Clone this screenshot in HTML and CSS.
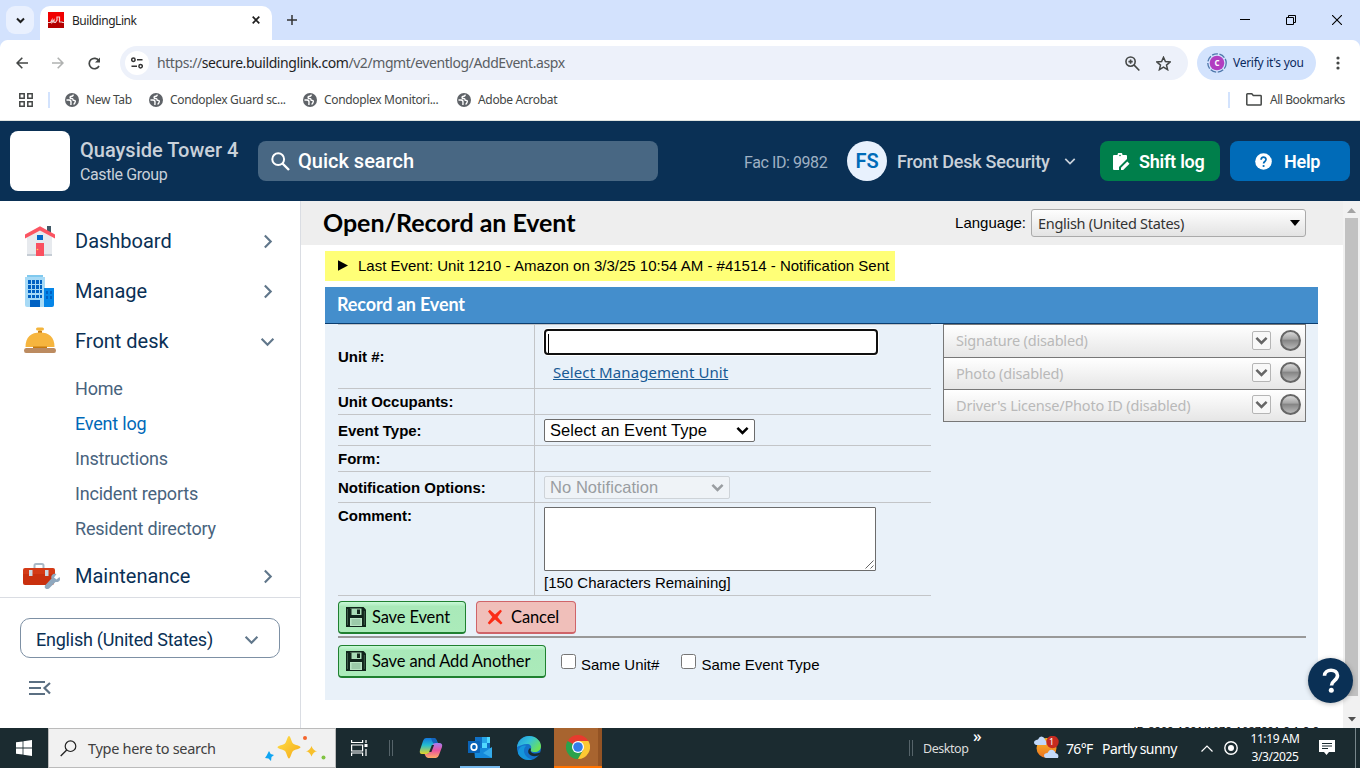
FILE: index.html
```html
<!DOCTYPE html>
<html lang="en">
<head>
<meta charset="utf-8">
<title>BuildingLink</title>
<link rel="stylesheet" href="styles.css">
</head>
<body>
<svg width="0" height="0" class="defs" aria-hidden="true">
  <defs>
    <symbol id="globe" viewBox="0 0 14 14"><circle cx="7" cy="7" r="7" fill="#5f6368"/><path d="M8.300 1.600 8 2.600q-.3.800-1.500.700Q5 3.300 5.100 4.600q.1.900 1.200.9 1.800-.1 1.700 1.300.1.700 1.200.6 1.300 0 1.100 1.300-.3 1.800-1.700 2.800M1.500 7h2.600q2 .2 1.900 2l-.1 3" fill="none" stroke="#fff" stroke-width="1.400"/></symbol>
    <symbol id="chev" viewBox="0 0 14 14"><path d="M1.500 4.500 7 10l5.500-5.500" fill="none" stroke="currentColor" stroke-width="2"/></symbol>
    <symbol id="chevbold" viewBox="0 0 14 14"><path d="M1.500 4.200 7 9.700l5.500-5.500" fill="none" stroke="currentColor" stroke-width="2.700"/></symbol>
    <symbol id="floppy" viewBox="0 0 20 20"><path d="M0 0h17.500l2.500 2.500V20H0z" fill="#10241b"/><path d="M4 1.500h11.500V8H4z" fill="#a9dcb7"/><path d="M11 2.500h3V7h-3zM4 1.500h1.500V8H4z" fill="#14271d"/><path d="M4 11h12v8H4z" fill="#b9e4c4"/><path d="M5.500 13h9M5.500 15h9M5.500 17h9" stroke="#7fb08e"/><path d="M1.500 2v16M18.300 4v14" stroke="#3c5c48"/></symbol>
  </defs>
</svg>

<div class="tabstrip">
  <div class="tabsearch"><svg width="9" height="7" viewBox="0 0 9 7"><path d="M1 1.500 4.500 5 8 1.500" fill="none" stroke="#1f1f1f" stroke-width="2"/></svg></div>
  <div class="tab">
    <svg class="favicon" width="16" height="16" viewBox="0 0 16 16"><path fill="#f00000" d="M0 0h16v9H0z"/><path fill="#b30000" d="M0 9h16v7H0z"/><path d="M0 10.500h2.500L4 8v2.500L6 8v2.500h1.500L9 8V5h2.500v5H14l.5.500H16" fill="none" stroke="#f3c9c9" stroke-width="1.200"/></svg>
    <span class="tab-title">BuildingLink</span>
    <svg width="8" height="8" viewBox="0 0 8 8"><path d="m.7.7 6.600 6.600M7.300.7.700 7.300" stroke="#1f1f1f" stroke-width="1.700"/></svg>
  </div>
  <svg class="newtab" width="10" height="10" viewBox="0 0 10 10"><path d="M5 0v10M0 5h10" stroke="#333" stroke-width="1.500"/></svg>
  <div class="winbtns">
    <svg width="10" height="10" viewBox="0 0 10 10"><path d="M0 4.500h10" stroke="#000"/></svg>
    <svg width="10" height="10" viewBox="0 0 10 10"><path d="M.5 2.500h7v7h-7zM2.500 2.500v-2h7v7h-2" fill="none" stroke="#000"/></svg>
    <svg width="10" height="10" viewBox="0 0 10 10"><path d="m0 0 10 10M10 0 0 10" stroke="#000" stroke-width="1.100"/></svg>
  </div>
</div>

<div class="toolbar">
  <svg class="nav-back" width="12" height="12" viewBox="0 0 12 12"><path d="M12 6H1.300M6.300.8 1.100 6l5.200 5.200" fill="none" stroke="#444746" stroke-width="1.600"/></svg>
  <svg class="nav-fwd" width="12" height="12" viewBox="0 0 12 12"><path d="M0 6h10.700M5.700.8 10.900 6l-5.200 5.200" fill="none" stroke="#b0b2b1" stroke-width="1.600"/></svg>
  <svg class="nav-reload" width="13" height="13" viewBox="0 0 13 13"><path d="M11 9a5.200 5.200 0 1 1-.2-5.300" fill="none" stroke="#444746" stroke-width="1.700"/><path d="M12 .5v5H7z" fill="#444746"/></svg>
  <div class="omnibox">
    <div class="siteinfo"><svg width="12" height="12" viewBox="0 0 12 12"><g fill="none" stroke="#333" stroke-width="1.500"><circle cx="2.400" cy="2.700" r="1.700"/><path d="M6 2.700h5.500M.5 9.200H6"/><circle cx="9.600" cy="9.200" r="1.700"/></g></svg></div>
    <div class="url"><span class="scheme">https://</span>secure.buildinglink.com<span class="path">/v2/mgmt/eventlog/AddEvent.aspx</span></div>
    <svg class="zoomico" width="15" height="15" viewBox="0 0 14 14"><g fill="none" stroke="#444746" stroke-width="1.500"><circle cx="5.200" cy="5.200" r="4.300"/><path d="m8.300 8.300 5.100 5.200M5.200 3.200v4M3.200 5.200h4"/></g></svg>
    <svg class="starico" width="15" height="15" viewBox="0 0 15 15"><path d="m7.500 1.300 1.900 4.300 4.700.4-3.600 3.100 1.100 4.600-4.100-2.500-4.100 2.500 1.100-4.600L.9 6l4.700-.4z" fill="none" stroke="#444746" stroke-width="1.500"/></svg>
  </div>
  <div class="profile"><svg class="avatar-ring" width="20" height="20" viewBox="0 0 20 20"><circle cx="10" cy="10" r="9.200" fill="none" stroke="#4e77ab" stroke-width="1.300" stroke-dasharray="6 1.600" /><circle cx="10" cy="10" r="7.300" fill="#b23ec0"/><text x="10" y="13.300" text-anchor="middle" class="ring-letter">c</text></svg><span class="verify">Verify it's you</span></div>
  <svg class="dots" width="4" height="16" viewBox="0 0 4 16"><g fill="#444746"><circle cx="2" cy="3" r="1.600"/><circle cx="2" cy="8" r="1.600"/><circle cx="2" cy="13" r="1.600"/></g></svg>
</div>

<div class="bookmarks">
  <svg class="apps" width="14" height="14" viewBox="0 0 14 14"><path d="M.8.8h4.400v4.400H.8zM8.800.8h4.400v4.400H8.800zM.8 8.800h4.400v4.400H.8zM8.800 8.800h4.400v4.400H8.800z" fill="none" stroke="#444746" stroke-width="1.500"/></svg>
  <i class="bm-sep"></i>
  <div class="bm bm-a"><svg width="14" height="14"><use href="#globe"/></svg><span>New Tab</span></div>
  <div class="bm bm-b"><svg width="14" height="14"><use href="#globe"/></svg><span>Condoplex Guard sc...</span></div>
  <div class="bm bm-b"><svg width="14" height="14"><use href="#globe"/></svg><span>Condoplex Monitori...</span></div>
  <div class="bm"><svg width="14" height="14"><use href="#globe"/></svg><span>Adobe Acrobat</span></div>
  <i class="bm-sep bm-right"></i>
  <div class="bm bm-all"><svg width="16" height="13" viewBox="0 0 16 13"><path d="M.8 1.500q0-.7.700-.7h4.300L7.300 2.500h7.200q.7 0 .7.700v8q0 .8-.7.800h-13q-.7 0-.7-.8z" fill="none" stroke="#444746" stroke-width="1.500"/></svg><span>All Bookmarks</span></div>
</div>

<header class="appbar">
  <div class="logo"></div>
  <div class="property"><div class="pname">Quayside Tower 4</div><div class="pgroup">Castle Group</div></div>
  <div class="search"><svg width="19" height="19" viewBox="0 0 19 19"><circle cx="7.200" cy="7.200" r="5.900" fill="none" stroke="#fff" stroke-width="2"/><path d="m11.500 11.500 6.500 6.500" stroke="#fff" stroke-width="2.400"/></svg><span>Quick search</span></div>
  <div class="fac">Fac ID: 9982</div>
  <div class="initials">FS</div>
  <div class="user">Front Desk Security</div>
  <svg class="userchev" width="12" height="12"><use href="#chev"/></svg>
  <div class="hbtn green"><svg width="18" height="18" viewBox="0 0 18 18"><path d="M2 2h3.500a2.500 2.500 0 0 1 5 0H14q1 0 1 1v3L7 14v3H2q-1 0-1-1V3q0-1 1-1z" fill="#fff"/><path d="m9 14.800 6.300-6.300 2.200 2.200-6.300 6.300H9z" fill="#fff"/><circle cx="8" cy="2.500" r=".8" fill="#007f4b"/></svg><span>Shift log</span></div>
  <div class="hbtn blue"><svg width="17" height="17" viewBox="0 0 17 17"><circle cx="8.500" cy="8.500" r="8.300" fill="#fff"/><path d="M6.100 6.800C6.100 3.300 11 3.400 11 6.500c0 2-2.400 2-2.400 4" fill="none" stroke="#006bb8" stroke-width="1.700"/><circle cx="8.600" cy="13" r="1.100" fill="#006bb8"/></svg><span>Help</span></div>
</header>

<div class="main">
  <nav class="sidebar">
    <div class="menu">
      <div class="item"><svg class="mi" width="32" height="32" viewBox="0 0 32 32"><path d="M23 1h4v8h-4z" fill="#435967"/><path d="M3 12 16 3l12 9v18q0 1-1 1H4q-1 0-1-1z" fill="#e7eaee"/><path d="M3 29h25v2H3z" fill="#c5ccd4"/><path d="m1 9.500 15-8.300 15 8.300v4L16 5.500 1 13.500z" fill="#fb5462"/><path d="M13 10h6v5h-6z" fill="#0067c8"/><path d="M12 18h8v13h-8z" fill="#fa5060"/><circle cx="13.500" cy="24.500" r=".8" fill="#ffd15c"/></svg><span>Dashboard</span><svg class="mc right" width="15" height="15"><use href="#chev"/></svg></div>
      <div class="item"><svg class="mi" width="32" height="32" viewBox="0 0 32 32"><path d="M3 0h16v3H3z" fill="#80c9ee"/><path d="M1 2h20v28q0 2-2 2H3q-2 0-2-2z" fill="#a7daf6"/><path d="M20 13h10v17q0 2-2 2h-8z" fill="#0586e8"/><path d="M4 5h3v4H4zm4 0h3v4H8zm4 0h3v4h-3zm4 0h2v4h-2zM4 10h3v4H4zm4 0h3v4H8zm4 0h3v4h-3zm4 0h2v4h-2zM4 15h3v3H4zm4 0h3v3H8zm4 0h3v3h-3zm4 0h2v3h-2zM4 20h3v3H4zm4 0h3v3H8zm4 0h3v3h-3zm4 0h2v3h-2zM6 25h10v7H6zM22 16h2v3h-2zm4 0h2v3h-2zm-4 5h2v3h-2zm4 0h2v3h-2z" fill="#0061c3"/></svg><span>Manage</span><svg class="mc right" width="15" height="15"><use href="#chev"/></svg></div>
      <div class="item"><svg class="mi" width="32" height="32" viewBox="0 0 32 32"><path d="M12 4q0-1.500 1.500-1.500h5Q20 2.500 20 4t-2 1.500h-4Q12 5.500 12 4zM14.500 5h3v3h-3z" fill="#f3b43b"/><path d="M14 6h4v2h-4z" fill="#c87d18"/><path d="M1.500 22C1.500 12 7 7.500 16 7.500S30.500 12 30.500 22z" fill="#f6b53e"/><path d="M9 20h14v3H9z" fill="#c67a10"/><path d="M2 18h28v3.500H2z" fill="#f6b53e"/><path d="M2 23h28q2 0 2 2.500T30 28H2q-2 0-2-2.500T2 23z" fill="#bc8b60"/></svg><span>Front desk</span><svg class="mc" width="15" height="15"><use href="#chev"/></svg></div>
      <div class="sub">
        <a>Home</a><a class="active">Event log</a><a>Instructions</a><a>Incident reports</a><a>Resident directory</a>
      </div>
      <div class="item item-last"><svg class="mi wide" width="38" height="28" viewBox="0 0 38 28"><path d="M11.500 7V3.500Q11.500 2 13 2h6q1.500 0 1.500 1.500V7" fill="none" stroke="#a9b9c7" stroke-width="2"/><path d="M2 6h28q2 0 2 2v6H0V8q0-2 2-2z" fill="#d43a16"/><path d="M0 12h31v9q0 2-2 2H2q-2 0-2-2z" fill="#c9300e"/><path d="M6 8h3.500v6H6zM22 8h3.500v6H22z" fill="#cbd8e3"/><path d="m26 26.500 6.500-6.500c5 .5 5-3 4-5l-3 2.500-2.500-2 2.500-3.500c-3-.8-6 1-5 4.500L22 23.500q-1 2 .5 3t3.500 0z" fill="#8fa8be"/></svg><span>Maintenance</span><svg class="mc right" width="15" height="15"><use href="#chev"/></svg></div>
    </div>
    <div class="sidefoot">
      <div class="langbox"><span>English (United States)</span><svg width="15" height="15"><use href="#chev"/></svg></div>
      <svg class="collapse" width="24" height="16" viewBox="0 0 24 16"><path d="M1 2h16M1 8h12M1 14h16M22 3l-5.500 5 5.500 5.500" fill="none" stroke="#5b6f82" stroke-width="2.200"/></svg>
    </div>
  </nav>

  <div class="content">
    <div class="titlebar"><h1>Open/Record an Event</h1><label>Language:</label><div class="langsel"><span>English (United States)</span><svg width="10" height="6" viewBox="0 0 10 6"><path d="M0 0h10L5 6z"/></svg></div></div>
    <div class="lastevent"><svg width="10" height="11" viewBox="0 0 10 11"><path d="M0 .3 10 5.500 0 10.700z"/></svg><span>Last Event: Unit 1210 - Amazon on 3/3/25 10:54 AM - #41514 - Notification Sent</span></div>
    <section class="panel">
      <h2>Record an Event</h2>
      <div class="cols">
        <div class="form">
          <div class="row r-unit"><div class="lab"><span>Unit #:</span></div><div class="val"><div class="unitinput"><i></i></div><a class="mgmt">Select Management Unit</a></div></div>
          <div class="row r-occ"><div class="lab"><span>Unit Occupants:</span></div><div class="val"></div></div>
          <div class="row r-type"><div class="lab"><span>Event Type:</span></div><div class="val"><div class="sel sel-type"><span>Select an Event Type</span><svg width="13" height="13"><use href="#chevbold"/></svg></div></div></div>
          <div class="row r-form"><div class="lab"><span>Form:</span></div><div class="val"></div></div>
          <div class="row r-notif"><div class="lab"><span>Notification Options:</span></div><div class="val"><div class="sel sel-notif"><span>No Notification</span><svg width="13" height="13"><use href="#chevbold"/></svg></div></div></div>
          <div class="row r-comment"><div class="lab"><span>Comment:</span></div><div class="val"><div class="area"><svg width="9" height="9" viewBox="0 0 9 9"><path d="M.5 8.500l8-8M5.500 8.500l3-3" stroke="#555" stroke-width=".9"/></svg></div><div class="remain">[150 Characters Remaining]</div></div></div>
        </div>
        <div class="acc">
          <div class="arow"><span>Signature (disabled)</span><b><svg width="13" height="13"><use href="#chevbold"/></svg></b><i></i></div>
          <div class="arow"><span>Photo (disabled)</span><b><svg width="13" height="13"><use href="#chevbold"/></svg></b><i></i></div>
          <div class="arow"><span>Driver's License/Photo ID (disabled)</span><b><svg width="13" height="13"><use href="#chevbold"/></svg></b><i></i></div>
        </div>
      </div>
      <div class="actions">
        <div class="btn save"><svg width="20" height="20"><use href="#floppy"/></svg><span>Save Event</span></div>
        <div class="btn cancel"><svg width="16" height="16" viewBox="0 0 16 16"><path d="M1 2.500 2.800.7 8 5.500 13.300.7 15 2l-4.500 6L15.500 14l-1.700 1.600L8 10.500 2.500 15.500.7 14l4.600-6z" fill="#fb2c16"/></svg><span>Cancel</span></div>
      </div>
      <div class="actions second">
        <div class="btn save another"><svg width="20" height="20"><use href="#floppy"/></svg><span>Save and Add Another</span></div>
        <div class="chk chk-a"><i></i><span>Same Unit#</span></div>
        <div class="chk"><i></i><span>Same Event Type</span></div>
      </div>
    </section>
    <div class="foot"><span>ID 8202-1221/1672-1637201 2 1 2 2</span></div>
  </div>
  <div class="scroll"><svg width="9" height="5" viewBox="0 0 9 5"><path d="M0 5 4.500 0 9 5z" fill="#a3a3a3"/></svg><div class="thumb"></div><svg class="dn" width="8" height="5" viewBox="0 0 8 5"><path d="M0 0h8L4 4.500z" fill="#505050"/></svg></div>
  <div class="fab"><svg width="18" height="25" viewBox="0 0 18 25"><path d="M2.500 7.800C2.500.2 15.500.5 15.500 7.500c0 5-6 5.300-6 10" fill="none" stroke="#fff" stroke-width="3.600"/><circle cx="9.300" cy="22.300" r="2.500" fill="#fff"/></svg></div>
</div>

<footer class="taskbar">
  <div class="start"><svg width="16" height="16" viewBox="0 0 16 16"><path d="m0 2.300 6.600-.9v6.200H0zM7.400 1.300 16 0v7.600H7.400zM0 8.400h6.600v6.200L0 13.700zM7.400 8.400H16V16l-8.600-1.200z" fill="#fff"/></svg></div>
  <div class="tsearch">
    <svg width="17" height="17" viewBox="0 0 17 17"><circle cx="10.500" cy="6.200" r="5.300" fill="none" stroke="#222" stroke-width="1.200"/><path d="M6.700 10 .7 16" stroke="#222" stroke-width="1.300"/></svg>
    <span>Type here to search</span>
    <svg class="sparkles" width="62" height="26" viewBox="0 0 62 26"><defs><linearGradient id="gold" x2="1" y2="1"><stop stop-color="#ffe04a"/><stop offset="1" stop-color="#f5aa18"/></linearGradient></defs><path d="M24 1c1.500 0 2.500 6 4 7.500s7.500 2.200 7.500 3.700-6 2.300-7.500 3.800-2.500 7.500-4 7.500-2.500-6-4-7.500-7.500-2.300-7.500-3.800S18.500 10 20 8.500 22.500 1 24 1z" fill="url(#gold)"/><path d="M46.500 11q1.500 4.500 5.500 5.300-4 .7-5.500 5.200-1.500-4.500-5.500-5.200 4-.8 5.500-5.300z" fill="#f8c02c"/><path d="m4 16 1.700 3 3.300 1-2.500 2-.5 4-2.500-2.500L0 23l1.700-2.500z" fill="#10a5f2"/><circle cx="40" cy="3" r="2" fill="#f4652c"/><circle cx="58.500" cy="22.500" r="2" fill="#80c342"/></svg>
  </div>
  <svg class="tv" width="17" height="16" viewBox="0 0 17 16"><path d="M.6 0v2.500h11V0M.6 16v-3h11v3M.6 5h11v6H.6zM15 0v3M15 9v7" fill="none" stroke="#fff" stroke-width="1.200"/><path d="M13.500 4h3v3h-3z" fill="#fff"/></svg>
  <i class="grip"></i>
  <svg class="copilot" width="24" height="22" viewBox="0 0 24 22"><defs><linearGradient id="cp1" x2="0" y2="1"><stop stop-color="#1477dd"/><stop offset=".45" stop-color="#24bdd0"/><stop offset="1" stop-color="#e8d326"/></linearGradient><linearGradient id="cp2" x2="0" y2="1"><stop stop-color="#a67cf2"/><stop offset=".5" stop-color="#e9559d"/><stop offset="1" stop-color="#ffac64"/></linearGradient></defs><path d="M7 1h8q2 0 3 3l1 3h-3q-2 0-3 3l-2 5q-1 2-3 2H3Q0 17 1 13l3-9q1-3 3-3z" fill="url(#cp1)"/><path d="M12 1h3q2 0 3 3l1 3h-3q-2 0-3-3z" fill="#1464bd"/><path d="M17 21H9q-2 0-3-3l-.4-1H8q2 0 3-3l2-5q1-3 4-3h3q4 0 3 4l-3 8q-1 3-3 3z" fill="url(#cp2)"/><path d="m10.200 15 2.700-7h2.200l-2.700 7z" fill="#1b2b30"/></svg>
  <div class="tb outlook"><svg width="24" height="22" viewBox="0 0 24 22"><path d="M7 1h15v13H7z" fill="#1070c5"/><path d="M14 1h5v6h-5z" fill="#28a7e8"/><path d="M19 1h3v6h-3zM14 7h5v6h-5z" fill="#50d9ff"/><path d="M6 12h18v9q0 1-1 1H7z" fill="#1489da"/><path d="m6 12 18 10V11l-9 6z" fill="#35abe9"/><path d="M0 5h11q1 0 1 1v10q0 1-1 1H0z" fill="#0a63b7"/><ellipse cx="6" cy="11" rx="2.800" ry="3.200" fill="none" stroke="#fff" stroke-width="1.700"/></svg></div>
  <div class="tb edge"><svg width="24" height="24" viewBox="0 0 24 24"><defs><linearGradient id="ed" x2="1" y2=".6"><stop stop-color="#2196dd"/><stop offset=".5" stop-color="#34c1da"/><stop offset="1" stop-color="#6be257"/></linearGradient></defs><circle cx="12" cy="12" r="12" fill="#1472ca"/><path d="M0 11C1 4 6 0 12 0c7 0 12 5 12 10 0 4-3 6-6 6-4 0-5-1.500-4-3 1-3-1-5-4-5-4 0-8 2-10 3z" fill="url(#ed)"/><path d="M9 10c-5 5 0 13 7 13.500-5 1.500-12 0-15-6 0-6 5-9 8-7.500z" fill="#1595db"/><path d="M14 13c-2 4 4 6 9 3.500q1 .2.500 1c-3 3.500-7 3-9.500 2-3-1.500-4-5-1-7.500z" fill="#1a2b30"/></svg></div>
  <div class="tb chrome"><svg width="24" height="24" viewBox="0 0 24 24"><path d="M12 12 1.600 6A12 12 0 0 1 22.400 6z" fill="#e83b2e"/><path d="M12 12 1.600 6A12 12 0 0 0 12 24l5.200-9z" fill="#2ba24c"/><path d="M12 6h10.400A12 12 0 0 1 12 24l5.200-9z" fill="#fcc934"/><circle cx="12" cy="12" r="6" fill="#fff"/><circle cx="12" cy="12" r="4.800" fill="#347de8"/></svg></div>
  <i class="grip grip2"></i>
  <span class="desk">Desktop</span><span class="more">»</span>
  <svg class="weather" width="26" height="24" viewBox="0 0 26 24"><defs><linearGradient id="sun" x2="0" y2="1"><stop stop-color="#f8bd2a"/><stop offset="1" stop-color="#ed701e"/></linearGradient></defs><circle cx="12.500" cy="12" r="10" fill="url(#sun)"/><path d="M2 9q-3-1-1.500-4Q2 3.500 4 3.500 6-1 9 1q2 1 2 3 3 2 1 5z" fill="#c2d8f8"/><path d="M12 22q-3-1-1.500-4Q12 17 13.500 17q2-4.500 5.500-3 2 1 2.500 3 4 1 2.500 5z" fill="#c5daf9"/><circle cx="18.500" cy="6" r="6.200" fill="#c62a20"/></svg>
  <span class="wbadge">1</span>
  <span class="temp">76°F</span><span class="sunny">Partly sunny</span>
  <svg class="up" width="12" height="7" viewBox="0 0 12 7"><path d="M.5 6.500 6 1l5.500 5.500" fill="none" stroke="#fff" stroke-width="1.200"/></svg>
  <svg class="rec" width="14" height="14" viewBox="0 0 14 14"><circle cx="7" cy="7" r="6.200" fill="none" stroke="#fff" stroke-width="1.400"/><circle cx="7" cy="7" r="3" fill="#fff"/></svg>
  <div class="clock"><div class="t1">11:19 AM</div><div class="t2">3/3/2025</div></div>
  <svg class="note" width="16" height="16" viewBox="0 0 16 16"><path d="M0 0h16v12h-6l-2.500 3L5 12H0z" fill="#fff"/><path d="M3 3.500h10M3 6h10M3 8.500h6" stroke="#1b2b30" stroke-width="1.100"/></svg>
  <i class="showdesk"></i>
</footer>
</body>
</html>
```
FILE: styles.css
```css
*{box-sizing:border-box}
body{margin:0;width:1360px;height:768px;overflow:hidden;display:flex;flex-direction:column;background:#fff;font-family:"Liberation Sans",Arial,sans-serif;color:#000}
svg{display:block;flex:none}
.defs{position:absolute}
span,div{white-space:nowrap}

.tabstrip{height:40px;flex:none;background:#d3e2fd;display:flex;align-items:center;font-family:"Noto Sans","Open Sans",sans-serif}
.tabsearch{width:28px;height:28px;margin-left:6px;border-radius:9px;background:#e9f0fe;display:flex;align-items:center;justify-content:center}
.tab{width:232px;height:34px;margin:6px 0 0 6px;background:#fff;border-radius:10px 10px 0 0;display:flex;align-items:center;padding:0 12px 6px 8px}
.tab-title{margin-left:8px;flex:1;font-size:12px;letter-spacing:-.45px;color:#1f1f1f}
.newtab{margin-left:15px}
.winbtns{margin-left:auto;display:flex;gap:36px;padding-right:18px}

.toolbar{height:46px;flex:none;display:flex;align-items:center;background:linear-gradient(#d3e2fd,#d3e2fd) top/100% 10px no-repeat;font-family:"Noto Sans","Open Sans",sans-serif}
.toolbar{background:radial-gradient(circle at 8px 8px,#fff 7.500px,#d3e2fd 8.500px) 0 0/8px 8px no-repeat,radial-gradient(circle at 0 8px,#fff 7.500px,#d3e2fd 8.500px) 100% 0/8px 8px no-repeat,#fff}
.nav-back{margin-left:16px}.nav-fwd{margin-left:24px}.nav-reload{margin-left:24px}
.omnibox{width:1068px;height:34px;margin-left:19px;border-radius:17px;background:#edf1fa;display:flex;align-items:center;padding-left:5px}
.siteinfo{width:24px;height:24px;border-radius:50%;background:#fff;display:flex;align-items:center;justify-content:center}
.url{margin-left:8px;font-size:14px;letter-spacing:-.43px;color:#1f1f1f;width:968px;padding-bottom:1px}
.scheme,.path{color:#5a5e63}
.starico{margin-left:16px}
.profile{width:119px;height:34px;margin-left:9px;border-radius:17px;background:#d3e3fd;display:flex;align-items:center;padding-left:10px}
.ring-letter{font:600 10px "Noto Sans",sans-serif;fill:#fff}
.verify{font-size:12px;letter-spacing:-.28px;margin-left:6px;color:#0a2a5e;padding-bottom:1px}
.dots{margin-left:20px}

.bookmarks{height:35px;flex:none;display:flex;align-items:center;border-bottom:1px solid #dfe4e1;font-family:"Noto Sans","Open Sans",sans-serif;font-size:12px;letter-spacing:-.33px;color:#444746;padding-bottom:7px}
.apps{margin-left:19px}
.bm-sep{width:2px;height:16px;background:#d3e3fd;margin-left:15px}
.bm{display:flex;align-items:center;margin-left:15px}
.bm span{margin-left:7px}
.bm-a{width:69px}.bm-b{width:139px}
.bm-a + .bm-b{margin-left:15px}
.bm-right{margin-left:auto}
.bm-all{width:99px;margin-right:15px;margin-left:16px;letter-spacing:-.45px}
.bm-all span{margin-left:8px}

.appbar{height:80px;flex:none;background:#0a3055;display:flex;align-items:center;font-family:Roboto,sans-serif;color:#c9d1da}
.logo{width:60px;height:60px;margin-left:10px;background:#fff;border-radius:8px}
.property{width:168px;margin-left:10px}
.pname{font-size:20px;font-weight:500;line-height:24px;margin-top:2px}
.pgroup{font-size:16px;line-height:25px;letter-spacing:-.42px}
.pgroup{letter-spacing:-.4px}
.search{width:400px;height:40px;margin-left:10px;background:#486783;border-radius:8px;display:flex;align-items:center;padding-left:13px;color:#fff;font-size:20px;font-weight:500}
.search span{margin-left:8px}
.fac{width:83px;margin-left:86px;font-size:16px;letter-spacing:-.42px;color:#9fb1c4;padding-top:3px}
.initials{width:40px;height:40px;margin-left:20px;border-radius:50%;background:#e8f1fd;color:#006bb8;font-size:20px;font-weight:600;display:flex;align-items:center;justify-content:center}
.user{width:153px;margin-left:10px;font-size:18px;letter-spacing:-.22px;font-weight:500;padding-top:1px}
.userchev{margin-left:14px}
.hbtn{width:120px;height:40px;border-radius:8px;display:flex;align-items:center;color:#fff;font-size:18px;font-weight:600;letter-spacing:-.25px;padding-top:1px}
.green{background:#007f4b;margin-left:24px;padding-left:12px}
.green span{margin-left:9px}
.blue{background:#006bb8;margin-left:10px;padding-left:25px}
.blue span{margin-left:12px}

.main{height:527px;flex:none;display:flex;position:relative}
.sidebar{width:301px;flex:none;border-right:1px solid #dadde3;font-family:Roboto,sans-serif;color:#0a3055;display:flex;flex-direction:column}
.menu{height:397px;border-bottom:1px solid #dadde3;padding-top:15px}
.item{height:50px;display:flex;align-items:center;font-size:20px;padding-left:24px;padding-right:25px}
.item span{margin-left:19px;flex:1}
.mc{color:#61778b}
.right{transform:rotate(-90deg)}
.sub{padding:5px 0 5px 75px;display:flex;flex-direction:column}
.sub a{height:35px;line-height:35px;font-size:18px;letter-spacing:-.2px;color:#48637d}
.sub a.active{color:#0069b8}
.item-last{padding-left:23px}
.item-last span{margin-left:14px}
.sidefoot{padding:20px}
.langbox{height:40px;border:1px solid #7d90a4;border-radius:10px;display:flex;align-items:center;justify-content:space-between;padding:3px 20px 0 15px;font-size:18px;letter-spacing:-.23px}
.langbox svg{color:#61778b}
.collapse{margin:22px 0 0 8px}

.content{width:1042px;flex:none;height:527px;overflow:hidden}
.titlebar{height:44px;background:#eee;display:flex;align-items:center;padding:0 37px 0 22px}
.titlebar h1{margin:-3px 0 0;flex:1;font:700 25px/30px Lato,sans-serif;letter-spacing:-.05px}
.titlebar label{font-size:15px;padding-bottom:1px}
.langsel{width:275px;height:28px;margin-left:5px;border:1px solid #aaa;border-radius:3px;background:linear-gradient(#fefefe,#e3e3e3);display:flex;align-items:center;justify-content:space-between;padding:0 5px 0 6px;font:14.500px "Noto Sans",sans-serif;color:#333;letter-spacing:-.3px}
.lastevent{width:570px;height:30px;margin:6px 0 6px 24px;background:#ffff77;display:flex;align-items:center;padding:0 0 1px 13px;font-size:15px}
.lastevent span{margin-left:10px}
.panel{width:993px;height:413px;margin-left:24px;background:#e9f1f9}
.panel h2{margin:0;height:37px;background:#448ecc;border-bottom:1px solid #0b3d6e;color:#fff;font:700 18px/35px Lato,sans-serif;padding-left:12px;letter-spacing:-.12px}
.cols{display:flex;padding-left:13px;height:272px}
.form{width:593px}
.row{display:flex;border-bottom:1px solid #c3c5c8}
.r-unit{height:65px;border-top:1px solid #c3c5c8}
.r-occ,.r-form{height:26px}.r-type,.r-notif{height:31px}.r-comment{height:93px}
.lab{width:197px;border-right:1px solid #c3c5c8;font-size:15px;letter-spacing:-.03px;font-weight:700;display:flex;align-items:center}
.r-type .lab,.r-notif .lab{padding-top:1px}
.r-comment .lab{align-items:flex-start;padding-top:4px}
.val{padding:4px 0 0 9px}
.unitinput{width:334px;height:26px;border:2px solid #101010;border-radius:4px;background:#fff;padding:3px 2px;box-shadow:0 0 0 1px #fff}
.unitinput i{display:block;width:1px;height:19px;background:#000}
.mgmt{display:block;margin:5px 0 0 9px;font:15px/24px "Noto Sans",sans-serif;color:#185a94;text-decoration:underline;letter-spacing:.08px}
.sel{height:23px;border:1px solid #6c6c6c;border-radius:2px;background:#fff;display:flex;align-items:center;justify-content:space-between;padding:0 5px 0 5px;font-size:16.500px;letter-spacing:.07px}
.sel-type{width:211px}
.sel-notif{width:186px;color:#999da1;background:#eff3f7;border-color:#ced3d8}
.area{width:332px;height:64px;border:1px solid #6c6c6c;border-radius:1px;background:#fff;display:flex;align-items:flex-end;justify-content:flex-end;padding:1px}
.remain{font-size:15px;line-height:24px}
.acc{width:363px;height:98px;margin-left:12px;border:1px solid #777;display:flex;flex-direction:column}
.arow{height:32px;background:linear-gradient(#fff,#e6e6e6);border-bottom:1px solid #777;display:flex;align-items:center;padding:0 4px 2px 12px;font:14.500px "Noto Sans",sans-serif;letter-spacing:-.2px;color:#b9b9b9}
.arow:first-child{height:33px}.arow:last-child{border:0;height:31px}
.arow span{flex:1}
.arow b{width:19px;height:19px;border:1px solid #b5b5b5;border-radius:2px;background:#f8f8f8;color:#666;display:flex;align-items:center;justify-content:center}
.arow i{width:21px;height:21px;margin-left:9px;border:2px solid #666;border-radius:50%;background:linear-gradient(#d8d8d8,#a8a8a8 40%,#868686 50%,#b9b9b9)}
.actions{height:42px;margin:0 12px 0 13px;padding-top:5px;display:flex;border-bottom:2px solid #999}
.second{border:0;padding-top:7px}
.btn{height:33px;border-radius:4px;display:flex;align-items:center;font:16.500px Lato,sans-serif;letter-spacing:-.13px;padding-left:7px}
.save{width:128px;background:linear-gradient(#c9fad8,#a9e9b9 15%,#abebba);border:1px solid #1f8030;border-bottom-width:2px}
.save span{margin-left:6px}
.another{width:208px}
.cancel{width:100px;margin-left:10px;padding-left:10px;background:#f0bfba;border:1px solid #cf6469;border-bottom-width:2px}
.cancel span{margin-left:8px}
.chk{display:flex;margin-left:22px;padding-top:9px;font-size:15px}
.chk i{width:15px;height:15px;border:1px solid #767676;border-radius:2.500px;background:#fff}
.chk span{margin-left:5px;padding-top:2px}
.chk-a{margin-left:15px}
.foot{height:12px;margin-top:25px;padding-right:24px;text-align:right;font-size:11px;letter-spacing:.25px}
.scroll{width:17px;background:#f1f1f1;display:flex;flex-direction:column;align-items:center;padding-top:7px}
.thumb{width:13px;height:478px;margin-top:5px;background:#c1c1c1}
.dn{margin-top:21px}
.fab{position:absolute;left:1308px;top:457px;width:45px;height:45px;border-radius:50%;background:#0a3055;display:flex;align-items:center;justify-content:center;box-shadow:0 1px 5px #0004}

.taskbar{height:40px;flex:none;background:#1b2b30;color:#fff;display:flex;align-items:center;font-family:"Noto Sans","Open Sans",sans-serif;position:relative}
.start{width:48px;display:flex;justify-content:center}
.tsearch{width:288px;height:40px;background:#f1f1f1;border:1px solid #bbb;display:flex;align-items:center;padding-left:11px;color:#404040;font-size:14.500px}
.tsearch span{margin-left:11px;letter-spacing:-.3px;width:165px}
.sparkles{margin-left:12px}
.tv{margin-left:15px}
.grip{width:4px;height:16px;border:solid #56646a;border-width:0 1px;margin-left:21px}
.copilot{margin:0 17px 0 26px}
.tb{height:40px;display:flex;align-items:center;justify-content:center}
.outlook{width:40px;margin-right:9px;border-bottom:2px solid #76b9ed}
.edge{width:40px;margin-right:5px}
.chrome{width:48px;background:#a8642f;border-bottom:2px solid #ff7300;box-shadow:inset -4px 0 #935324}
.grip2{margin-left:307px}
.desk{font-size:12.500px;letter-spacing:-.45px;margin-left:10px;width:46px;color:#ddd}
.more{font-size:16px;font-weight:500;line-height:17px;margin:-24px 0 0 4px;width:10px}
.weather{margin-left:51px}
.wbadge{position:absolute;left:1049px;top:8px;font-size:9px;line-height:12px}
.temp{font-size:14px;letter-spacing:-.65px;margin-left:6px;width:28px}
.sunny{font-size:14px;letter-spacing:-.55px;margin-left:8px;width:75px}
.up{margin-left:24px}.rec{margin-left:11px}
.clock{width:50px;margin-left:12px;text-align:center;font-size:12px;letter-spacing:-.4px;line-height:18px}
.note{margin-left:19px}
.showdesk{width:1px;height:40px;background:#78868b;margin-left:20px}
```
